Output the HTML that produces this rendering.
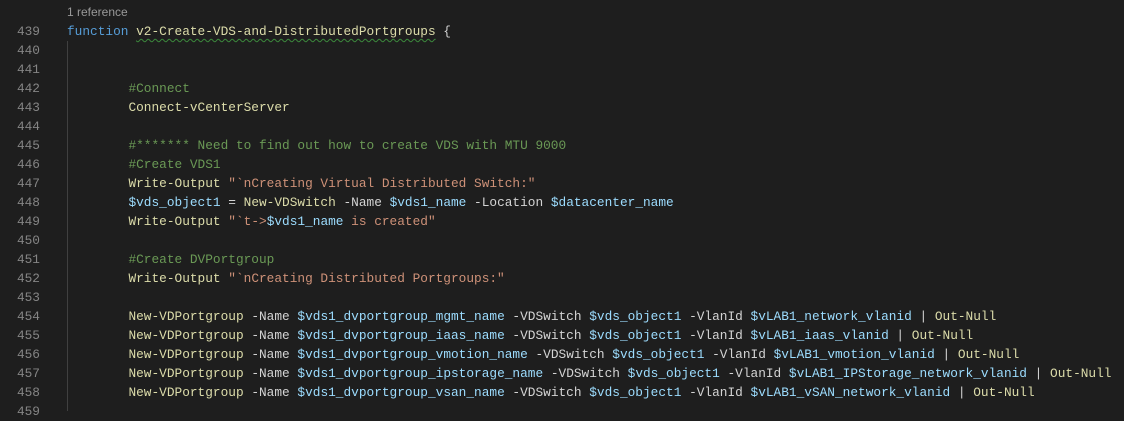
<!DOCTYPE html>
<html><head><meta charset="utf-8"><style>
html,body{margin:0;padding:0;background:#1e1e1e;width:1124px;height:408px;overflow:hidden}
.ln{position:absolute;left:0;width:40px;text-align:right;color:#858585;font:12.8px "Liberation Mono",monospace;line-height:19px;white-space:pre}
.c{position:absolute;left:67px;color:#d4d4d4;font:12.8px "Liberation Mono",monospace;line-height:19px;white-space:pre}
.k{color:#569cd6}.f{color:#dcdcaa}.v{color:#9cdcfe}.s{color:#ce9178}.m{color:#6a9955}
.sq{text-decoration:underline wavy #3c8a3c;text-underline-offset:3px;text-decoration-thickness:1px}
.ref{position:absolute;left:67px;top:5px;color:#999;font:12px "Liberation Sans",sans-serif}
.g{position:absolute;left:67px;top:41px;width:1px;height:370px;background:#404040}
</style></head><body>
<div class="ref">1 reference</div>
<div class="g"></div>
<div id="w"></div>
<div class="ln" style="top:22px">439</div><div class="c" style="top:22px"><span class="k">function</span> <span class="f sq">v2-Create-VDS-and-DistributedPortgroups</span> {</div>
<div class="ln" style="top:41px">440</div>
<div class="ln" style="top:60px">441</div>
<div class="ln" style="top:79px">442</div><div class="c" style="top:79px">        <span class="m">#Connect</span></div>
<div class="ln" style="top:98px">443</div><div class="c" style="top:98px">        <span class="f">Connect-vCenterServer</span></div>
<div class="ln" style="top:117px">444</div>
<div class="ln" style="top:136px">445</div><div class="c" style="top:136px">        <span class="m">#******* Need to find out how to create VDS with MTU 9000</span></div>
<div class="ln" style="top:155px">446</div><div class="c" style="top:155px">        <span class="m">#Create VDS1</span></div>
<div class="ln" style="top:174px">447</div><div class="c" style="top:174px">        <span class="f">Write-Output</span> <span class="s">"`nCreating Virtual Distributed Switch:"</span></div>
<div class="ln" style="top:193px">448</div><div class="c" style="top:193px">        <span class="v">$vds_object1</span> = <span class="f">New-VDSwitch</span> -Name <span class="v">$vds1_name</span> -Location <span class="v">$datacenter_name</span></div>
<div class="ln" style="top:212px">449</div><div class="c" style="top:212px">        <span class="f">Write-Output</span> <span class="s">"`t-&gt;</span><span class="v">$vds1_name</span><span class="s"> is created"</span></div>
<div class="ln" style="top:231px">450</div>
<div class="ln" style="top:250px">451</div><div class="c" style="top:250px">        <span class="m">#Create DVPortgroup</span></div>
<div class="ln" style="top:269px">452</div><div class="c" style="top:269px">        <span class="f">Write-Output</span> <span class="s">"`nCreating Distributed Portgroups:"</span></div>
<div class="ln" style="top:288px">453</div>
<div class="ln" style="top:307px">454</div><div class="c" style="top:307px">        <span class="f">New-VDPortgroup</span> -Name <span class="v">$vds1_dvportgroup_mgmt_name</span> -VDSwitch <span class="v">$vds_object1</span> -VlanId <span class="v">$vLAB1_network_vlanid</span> | <span class="f">Out-Null</span></div>
<div class="ln" style="top:326px">455</div><div class="c" style="top:326px">        <span class="f">New-VDPortgroup</span> -Name <span class="v">$vds1_dvportgroup_iaas_name</span> -VDSwitch <span class="v">$vds_object1</span> -VlanId <span class="v">$vLAB1_iaas_vlanid</span> | <span class="f">Out-Null</span></div>
<div class="ln" style="top:345px">456</div><div class="c" style="top:345px">        <span class="f">New-VDPortgroup</span> -Name <span class="v">$vds1_dvportgroup_vmotion_name</span> -VDSwitch <span class="v">$vds_object1</span> -VlanId <span class="v">$vLAB1_vmotion_vlanid</span> | <span class="f">Out-Null</span></div>
<div class="ln" style="top:364px">457</div><div class="c" style="top:364px">        <span class="f">New-VDPortgroup</span> -Name <span class="v">$vds1_dvportgroup_ipstorage_name</span> -VDSwitch <span class="v">$vds_object1</span> -VlanId <span class="v">$vLAB1_IPStorage_network_vlanid</span> | <span class="f">Out-Null</span></div>
<div class="ln" style="top:383px">458</div><div class="c" style="top:383px">        <span class="f">New-VDPortgroup</span> -Name <span class="v">$vds1_dvportgroup_vsan_name</span> -VDSwitch <span class="v">$vds_object1</span> -VlanId <span class="v">$vLAB1_vSAN_network_vlanid</span> | <span class="f">Out-Null</span></div>
<div class="ln" style="top:402px">459</div>
</body></html>
